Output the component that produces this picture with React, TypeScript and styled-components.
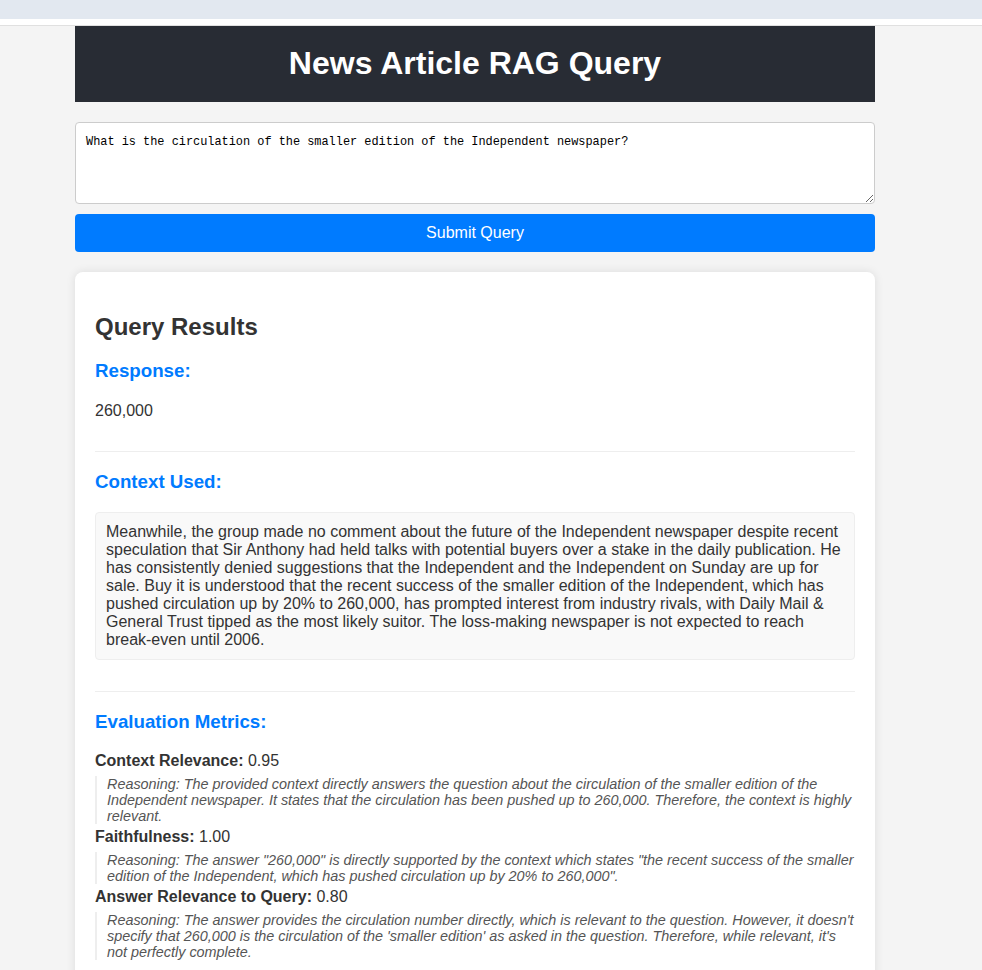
import React from "react";
import styled, { createGlobalStyle } from "styled-components";

const Global = createGlobalStyle`
  html, body { margin: 0; padding: 0; }
  body {
    background: #f4f4f4;
    font-family: "Liberation Sans", Arial, sans-serif;
    color: #333;
  }
`;

const TopStrip = styled.div`
  height: 19px;
  background: #e2e8f0;
`;

const TopGap = styled.div`
  height: 6px;
  background: #ffffff;
  border-bottom: 1px solid #e0e0e0;
`;

const Page = styled.div`
  width: 800px;
  margin-left: 75px;
`;

const Header = styled.header`
  background: #282c34;
  padding: 19px 20px 21px;
  text-align: center;
`;

const Title = styled.h1`
  margin: 0;
  color: #ffffff;
  font-size: 32px;
  line-height: 36px;
  font-weight: bold;
`;

const QueryInput = styled.textarea`
  display: block;
  box-sizing: border-box;
  width: 100%;
  height: 82px;
  margin-top: 20px;
  padding: 11px 10px 9px;
  border: 1px solid #ccc;
  border-radius: 4px;
  background: #fff;
  font-family: "Liberation Mono", monospace;
  font-size: 11.9px;
  line-height: 16px;
  color: #000;
  resize: vertical;
`;

const SubmitButton = styled.button`
  display: block;
  width: 100%;
  height: 38px;
  margin-top: 10px;
  border: none;
  border-radius: 4px;
  background: #007bff;
  color: #fff;
  font-family: "Liberation Sans", Arial, sans-serif;
  font-size: 16px;
  cursor: pointer;
`;

const Card = styled.section`
  margin-top: 20px;
  background: #fff;
  border-radius: 8px;
  box-shadow: 0 0 10px rgba(0, 0, 0, 0.1);
  padding: 20px;
  padding-bottom: 40px;
`;

const CardTitle = styled.h2`
  margin: 21px 0 0;
  font-size: 24px;
  line-height: 28px;
  font-weight: bold;
  color: #333;
`;

const Section = styled.div<{ $divider?: boolean }>`
  padding-bottom: 15px;
  border-bottom: ${(p) => (p.$divider ? "1px solid #eee" : "none")};
`;

const SectionTitle = styled.h3`
  margin: 19px 0;
  font-size: 18.72px;
  line-height: 22px;
  font-weight: bold;
  color: #007bff;
`;

const Answer = styled.p`
  margin: 0 0 16px;
  font-size: 16px;
  line-height: 19px;
`;

const ContextBox = styled.p`
  margin: 0 0 16px;
  padding: 10px;
  background: #f9f9f9;
  border: 1px solid #eee;
  border-radius: 4px;
  font-size: 16px;
  line-height: 18px;
`;

const MetricLabel = styled.div`
  font-size: 16px;
  line-height: 18px;
  b { font-weight: bold; }
`;

const Reasoning = styled.blockquote`
  margin: 6px 0 4px;
  padding-left: 10px;
  border-left: 2px solid #eee;
  font-size: 14.4px;
  line-height: 16px;
  font-style: italic;
  color: #555;
`;

const metrics = [
  {
    name: "Context Relevance:",
    score: "0.95",
    reasoning:
      "Reasoning: The provided context directly answers the question about the circulation of the smaller edition of the Independent newspaper. It states that the circulation has been pushed up to 260,000. Therefore, the context is highly relevant.",
  },
  {
    name: "Faithfulness:",
    score: "1.00",
    reasoning:
      'Reasoning: The answer "260,000" is directly supported by the context which states "the recent success of the smaller edition of the Independent, which has pushed circulation up by 20% to 260,000".',
  },
  {
    name: "Answer Relevance to Query:",
    score: "0.80",
    reasoning:
      "Reasoning: The answer provides the circulation number directly, which is relevant to the question. However, it doesn't specify that 260,000 is the circulation of the 'smaller edition' as asked in the question. Therefore, while relevant, it's not perfectly complete.",
  },
];

export default function App() {
  return (
    <>
      <Global />
      <TopStrip />
      <TopGap />
      <Page>
        <Header>
          <Title>News Article RAG Query</Title>
        </Header>
        <QueryInput
          defaultValue="What is the circulation of the smaller edition of the Independent newspaper?"
        />
        <SubmitButton>Submit Query</SubmitButton>
        <Card>
          <CardTitle>Query Results</CardTitle>
          <Section $divider>
            <SectionTitle>Response:</SectionTitle>
            <Answer>260,000</Answer>
          </Section>
          <Section $divider>
            <SectionTitle>Context Used:</SectionTitle>
            <ContextBox>
              Meanwhile, the group made no comment about the future of the Independent newspaper despite recent
              speculation that Sir Anthony had held talks with potential buyers over a stake in the daily publication. He
              has consistently denied suggestions that the Independent and the Independent on Sunday are up for sale. Buy
              it is understood that the recent success of the smaller edition of the Independent, which has pushed
              circulation up by 20% to 260,000, has prompted interest from industry rivals, with Daily Mail &amp; General
              Trust tipped as the most likely suitor. The loss-making newspaper is not expected to reach break-even until
              2006.
            </ContextBox>
          </Section>
          <Section>
            <SectionTitle>Evaluation Metrics:</SectionTitle>
            {metrics.map((m) => (
              <div key={m.name}>
                <MetricLabel>
                  <b>{m.name}</b> {m.score}
                </MetricLabel>
                <Reasoning>{m.reasoning}</Reasoning>
              </div>
            ))}
          </Section>
        </Card>
      </Page>
    </>
  );
}
